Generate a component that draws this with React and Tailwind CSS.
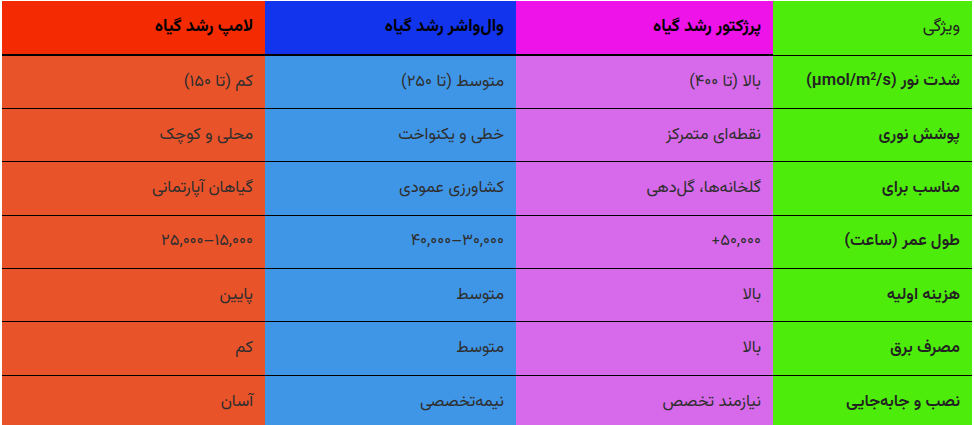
const columns = [
  { key: "feature", label: "ویژگی" },
  { key: "projector", label: "پرژکتور رشد گیاه" },
  { key: "washer", label: "وال‌واشر رشد گیاه" },
  { key: "lamp", label: "لامپ رشد گیاه" },
];

const rows = [
  {
    feature: (
      <>
        شدت نور (<span dir="ltr">µmol/m<sup className="text-[10px]">2</sup>/s</span>)
      </>
    ),
    projector: "بالا (تا ۴۰۰)",
    washer: "متوسط (تا ۲۵۰)",
    lamp: "کم (تا ۱۵۰)",
  },
  { feature: "پوشش نوری", projector: "نقطه‌ای متمرکز", washer: "خطی و یکنواخت", lamp: "محلی و کوچک" },
  { feature: "مناسب برای", projector: "گلخانه‌ها، گل‌دهی", washer: "کشاورزی عمودی", lamp: "گیاهان آپارتمانی" },
  { feature: "طول عمر (ساعت)", projector: "۵۰,۰۰۰+", washer: "۳۰,۰۰۰–۴۰,۰۰۰", lamp: "۱۵,۰۰۰–۲۵,۰۰۰" },
  { feature: "هزینه اولیه", projector: "بالا", washer: "متوسط", lamp: "پایین" },
  { feature: "مصرف برق", projector: "بالا", washer: "متوسط", lamp: "کم" },
  { feature: "نصب و جابه‌جایی", projector: "نیازمند تخصص", washer: "نیمه‌تخصصی", lamp: "آسان" },
];

const headCls = {
  feature: "bg-[#4dec0a] font-normal text-[#222] border-b border-black w-[199px]",
  projector: "bg-[#ee14e9] font-bold text-black border-b-2 border-black w-[257px]",
  washer: "bg-[#1234ec] font-bold text-black border-b-2 border-black w-[251px]",
  lamp: "bg-[#f42a02] font-bold text-black border-b-2 border-black w-[263px]",
};

const cellCls = {
  feature: "bg-[#4dec0a] font-semibold text-[#222]",
  projector: "bg-[#d66aea] text-[#2e2e2e]",
  washer: "bg-[#4096e6] text-[#2e2e2e]",
  lamp: "bg-[#e9532a] text-[#2e2e2e]",
};

export default function App() {
  return (
    <div className="bg-white min-h-screen pt-px px-[2px] font-['Vazirmatn',sans-serif]">
      <table dir="rtl" className="w-[970px] border-collapse table-fixed text-[16.5px]">
        <thead>
          <tr>
            {columns.map((c) => (
              <th key={c.key} className={`h-[54px] px-3 text-right align-middle text-[17px] ${headCls[c.key]}`}>
                {c.label}
              </th>
            ))}
          </tr>
        </thead>
        <tbody>
          {rows.map((r, i) => (
            <tr key={i} className="border-b border-black last:border-b-0">
              {columns.map((c) => (
                <td key={c.key} className={`h-[53.4px] px-3 text-right align-middle ${cellCls[c.key]}`}>
                  {r[c.key]}
                </td>
              ))}
            </tr>
          ))}
        </tbody>
      </table>
    </div>
  );
}
